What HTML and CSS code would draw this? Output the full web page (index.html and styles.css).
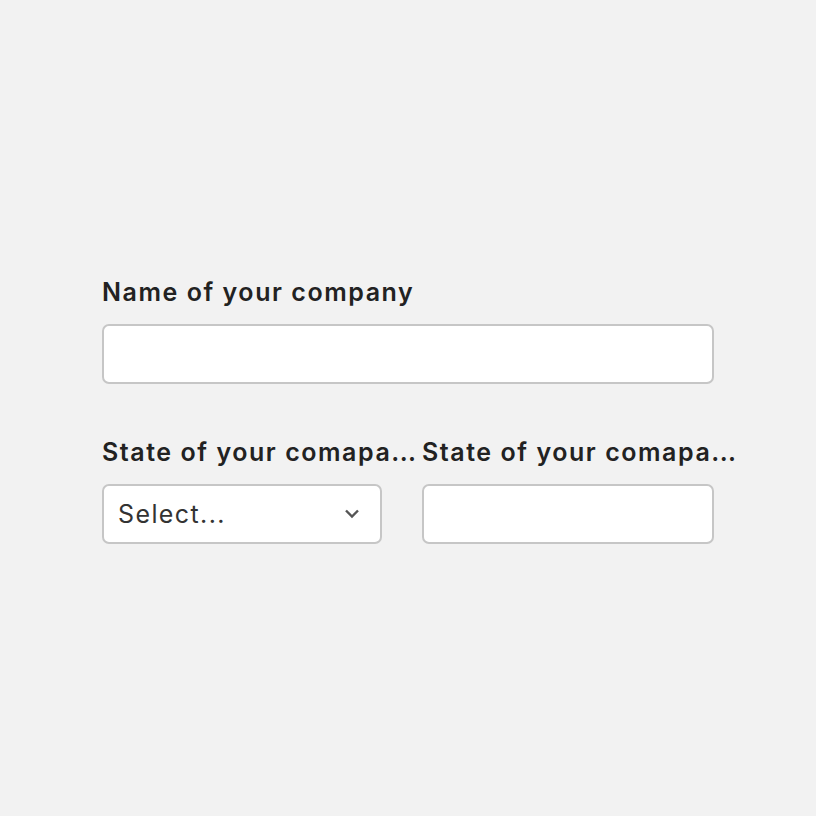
FILE: index.html
```html
<!DOCTYPE html>
<html>
<head>
<meta charset="utf-8">
<link rel="stylesheet" href="styles.css">
</head>
<body>
<div class="form">
  <div class="field">
    <div class="label">Name of your company</div>
    <div class="input"></div>
  </div>
  <div class="row">
    <div class="field col-a">
      <div class="label">State of your comapa<span class="dots">...</span></div>
      <div class="input select">
        <span class="placeholder">Select...</span>
        <svg class="chev" width="16" height="10" viewBox="0 0 16 10"><path d="M2 1.5 L8 7.5 L14 1.5" fill="none" stroke="#555" stroke-width="2.4" stroke-linecap="butt" stroke-linejoin="miter"/></svg>
      </div>
    </div>
    <div class="field col-b">
      <div class="label">State of your comapa<span class="dots">...</span></div>
      <div class="input"></div>
    </div>
  </div>
</div>
</body>
</html>
```
FILE: styles.css
```css
html, body {
  margin: 0;
  padding: 0;
  background: #f2f2f2;
  font-family: Inter, "Noto Sans", sans-serif;
  color: #222;
}
.form {
  width: 612px;
  padding: 276px 0 0 102px;
  display: flex;
  flex-direction: column;
  gap: 52px;
}
.field {
  display: flex;
  flex-direction: column;
  gap: 16px;
}
.label {
  font-size: 25px;
  letter-spacing: 1.55px;
  font-weight: 600;
  line-height: 32px;
  white-space: nowrap;
  color: #222;
}
.dots {
  letter-spacing: 0.4px;
}
.input {
  height: 56px;
  background: #fff;
  border: 2px solid #c6c6c6;
  border-radius: 7px;
}
.row {
  display: flex;
  gap: 40px;
}
.col-a { width: 280px; }
.col-b { width: 292px; }
.select {
  display: flex;
  align-items: center;
  justify-content: space-between;
  padding: 0 20px 0 14px;
}
.placeholder {
  font-size: 25px;
  letter-spacing: 1.4px;
  color: #333;
}
.chev { display: block; }
```
